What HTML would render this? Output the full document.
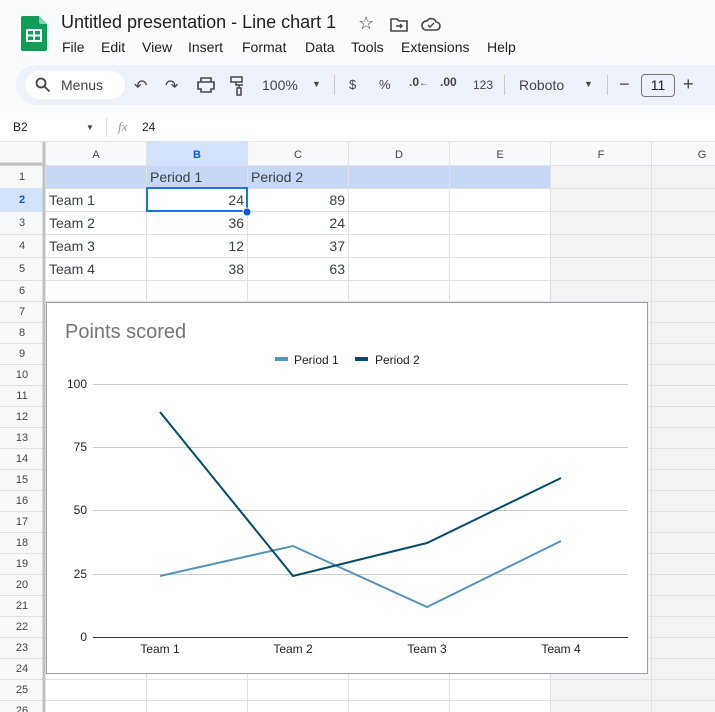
<!DOCTYPE html><html><head><style>
*{margin:0;padding:0;box-sizing:border-box}
body{width:715px;height:712px;overflow:hidden;background:#f9fbfd;font-family:"Liberation Sans",Arial,sans-serif;position:relative;color:#1f1f1f}
.a{position:absolute;white-space:nowrap}
</style></head><body>
<svg class="a" style="left:21px;top:16px" width="26" height="35" viewBox="0 0 26 35"><path d="M2 0h16l8 8v25a2 2 0 0 1-2 2H2a2 2 0 0 1-2-2V2a2 2 0 0 1 2-2z" fill="#0f9d58"/><path d="M18 0l8 8h-6a2 2 0 0 1-2-2z" fill="#87ceac"/><rect x="6" y="14" width="14" height="11" fill="none" stroke="#fff" stroke-width="2"/><path d="M6 19.5h14M13 14v11" stroke="#fff" stroke-width="2"/></svg>
<div class="a" style="left:61px;top:12px;font-size:18px">Untitled presentation - Line chart 1</div>
<div class="a" style="left:358px;top:13px;font-size:18px;color:#444">☆</div>
<svg class="a" style="left:390px;top:17px" width="18" height="15"><path d="M1 2h6l2 2h8v10H1z" fill="none" stroke="#444" stroke-width="1.6"/><path d="M6 9h6M10 7l2 2-2 2" stroke="#444" stroke-width="1.4" fill="none"/></svg>
<svg class="a" style="left:421px;top:17px" width="20" height="14"><path d="M5 13h10a4 4 0 0 0 0-8 5 5 0 0 0-9-1 4.5 4.5 0 0 0-1 9z" fill="none" stroke="#444" stroke-width="1.6"/><path d="M7 8l2 2 4-4" stroke="#444" stroke-width="1.4" fill="none"/></svg>
<div class="a" style="left:62px;top:39px;font-size:14px">File</div>
<div class="a" style="left:101px;top:39px;font-size:14px">Edit</div>
<div class="a" style="left:142px;top:39px;font-size:14px">View</div>
<div class="a" style="left:188px;top:39px;font-size:14px">Insert</div>
<div class="a" style="left:242px;top:39px;font-size:14px">Format</div>
<div class="a" style="left:305px;top:39px;font-size:14px">Data</div>
<div class="a" style="left:351px;top:39px;font-size:14px">Tools</div>
<div class="a" style="left:401px;top:39px;font-size:14px">Extensions</div>
<div class="a" style="left:487px;top:39px;font-size:14px">Help</div>
<div class="a" style="left:16px;top:65px;width:720px;height:40px;background:#edf2fa;border-radius:20px"></div>
<div class="a" style="left:25px;top:71px;width:100px;height:28px;background:#fff;border-radius:14px"></div>
<svg class="a" style="left:35px;top:77px" width="16" height="16"><circle cx="6" cy="6" r="4.5" fill="none" stroke="#444" stroke-width="1.8"/><path d="M9.5 9.5l5 5" stroke="#444" stroke-width="1.8"/></svg>
<div class="a" style="left:61px;top:77px;font-size:14px;color:#444">Menus</div>
<div class="a" style="left:134px;top:76px;font-size:16px;color:#444">↶</div>
<div class="a" style="left:165px;top:76px;font-size:16px;color:#444">↷</div>
<svg class="a" style="left:197px;top:77px" width="18" height="16"><path d="M4 1h10v4H4zM1 5h16v7h-3v3H4v-3H1z" fill="none" stroke="#444" stroke-width="1.6"/></svg>
<svg class="a" style="left:229px;top:76px" width="16" height="20"><path d="M2 1h11v5H2zM7 6v3h7M10 9v3M8 12h4v7H8z" fill="none" stroke="#444" stroke-width="1.5"/></svg>
<div class="a" style="left:262px;top:77px;font-size:14px;color:#444">100%</div>
<div class="a" style="left:312px;top:79px;font-size:9px;color:#444">▼</div>
<div class="a" style="left:334px;top:75px;width:1px;height:20px;background:#c7c7c7"></div>
<div class="a" style="left:349px;top:77px;font-size:13px;color:#444">$</div>
<div class="a" style="left:379px;top:77px;font-size:13px;color:#444">%</div>
<div class="a" style="left:409px;top:75px;font-size:12px;color:#444;font-weight:bold">.0<span style="font-size:10px">←</span></div>
<div class="a" style="left:440px;top:75px;font-size:12px;color:#444;font-weight:bold">.00</div>
<div class="a" style="left:473px;top:78px;font-size:12px;color:#444">123</div>
<div class="a" style="left:504px;top:75px;width:1px;height:20px;background:#c7c7c7"></div>
<div class="a" style="left:519px;top:77px;font-size:14px;color:#444">Roboto</div>
<div class="a" style="left:584px;top:79px;font-size:9px;color:#444">▼</div>
<div class="a" style="left:607px;top:75px;width:1px;height:20px;background:#c7c7c7"></div>
<div class="a" style="left:619px;top:74px;font-size:18px;color:#444">−</div>
<div class="a" style="left:641px;top:74px;width:34px;height:23px;border:1px solid #747775;border-radius:4px;font-size:14px;text-align:center;line-height:21px">11</div>
<div class="a" style="left:683px;top:74px;font-size:18px;color:#444">+</div>
<div class="a" style="left:0;top:113px;width:715px;height:29px;background:#fff;border-bottom:1px solid #e1e1e1"></div>
<div class="a" style="left:13px;top:120px;font-size:12px">B2</div>
<div class="a" style="left:86px;top:123px;font-size:8px;color:#444">▼</div>
<div class="a" style="left:106px;top:118px;width:1px;height:19px;background:#ddd"></div>
<div class="a" style="left:118px;top:119px;font-size:13px;color:#999;font-style:italic;font-family:'Liberation Serif',serif">fx</div>
<div class="a" style="left:142px;top:120px;font-size:12px">24</div>
<svg class="a" style="left:0;top:142px" width="715" height="570" font-family="Liberation Sans, Arial, sans-serif">
<rect x="0" y="0" width="715" height="570" fill="#fff"/>
<rect x="551" y="23" width="164" height="547" fill="#f3f3f3"/>
<rect x="0" y="0" width="715" height="23" fill="#f8f9fa"/>
<rect x="0" y="0" width="45" height="570" fill="#f8f9fa"/>
<rect x="147" y="0" width="100" height="23" fill="#d3e3fd"/>
<rect x="0" y="46" width="45" height="23" fill="#d3e3fd"/>
<rect x="46" y="23" width="504" height="23" fill="#c6d8f6"/>
<g stroke="#e1e1e1" stroke-width="1">
<path d="M0 23.5H715M0 46.5H715M0 69.5H715M0 92.5H715M0 115.5H715M0 138.5H715M0 159.5H715M0 180.5H715M0 201.5H715M0 222.5H715M0 243.5H715M0 264.5H715M0 285.5H715M0 306.5H715M0 327.5H715M0 348.5H715M0 369.5H715M0 390.5H715M0 411.5H715M0 432.5H715M0 453.5H715M0 474.5H715M0 495.5H715M0 516.5H715M0 537.5H715M0 558.5H715"/>
<path d="M146.5 0V570M247.5 0V570M348.5 0V570M449.5 0V570M550.5 0V570M651.5 0V570"/>
</g>
<rect x="0" y="0" width="45" height="23" fill="#f8f9fa"/>
<path d="M44 0V570M0 22H45" stroke="#c0c0c0" stroke-width="3"/>
<g font-size="11" fill="#444" text-anchor="middle">
<text x="96" y="16">A</text><text x="197" y="16" font-weight="bold" fill="#0b57d0">B</text><text x="298" y="16">C</text><text x="399" y="16">D</text><text x="500" y="16">E</text><text x="601" y="16">F</text><text x="702" y="16">G</text>
<text x="22" y="38">1</text><text x="22" y="61" font-weight="bold" fill="#0b57d0">2</text><text x="22" y="84">3</text><text x="22" y="107">4</text><text x="22" y="130">5</text>
<text x="22" y="152">6</text><text x="22" y="173">7</text><text x="22" y="194">8</text><text x="22" y="215">9</text><text x="22" y="236">10</text><text x="22" y="257">11</text><text x="22" y="278">12</text><text x="22" y="299">13</text><text x="22" y="320">14</text><text x="22" y="341">15</text><text x="22" y="362">16</text><text x="22" y="383">17</text><text x="22" y="404">18</text><text x="22" y="425">19</text><text x="22" y="446">20</text><text x="22" y="467">21</text><text x="22" y="488">22</text><text x="22" y="509">23</text><text x="22" y="530">24</text><text x="22" y="551">25</text><text x="22" y="572">26</text>
</g>
<g font-size="14" fill="#3c4043">
<text x="150" y="40">Period 1</text><text x="251" y="40">Period 2</text>
<text x="49" y="63">Team 1</text><text x="49" y="86">Team 2</text><text x="49" y="109">Team 3</text><text x="49" y="132">Team 4</text>
</g>
<g font-size="14" fill="#3c4043" text-anchor="end">
<text x="244" y="63">24</text><text x="244" y="86">36</text><text x="244" y="109">12</text><text x="244" y="132">38</text>
<text x="345" y="63">89</text><text x="345" y="86">24</text><text x="345" y="109">37</text><text x="345" y="132">63</text>
</g>
<rect x="147" y="46" width="100" height="23" fill="none" stroke="#1a73e8" stroke-width="2"/>
<circle cx="247" cy="70" r="4" fill="#0b57d0" stroke="#fff" stroke-width="1"/>
</svg>
<svg class="a" style="left:46px;top:302px" width="603" height="373" font-family="Liberation Sans, Arial, sans-serif">
<rect x="0.5" y="0.5" width="601" height="371" fill="#fff" stroke="#9aa0a6"/>
<text x="19" y="36" font-size="20" fill="#757575">Points scored</text>
<rect x="229" y="55" width="13" height="4" fill="#5b93b5"/><text x="248" y="62" font-size="12" fill="#222">Period 1</text>
<rect x="309" y="55" width="13" height="4" fill="#0b4a66"/><text x="329" y="62" font-size="12" fill="#222">Period 2</text>
<g stroke="#ccc"><path d="M47 82.5H582M47 145.5H582M47 208.5H582M47 272.5H582"/></g>
<path d="M47 335.5H582" stroke="#333"/>
<g font-size="12" fill="#222" text-anchor="end"><text x="41" y="86">100</text><text x="41" y="149">75</text><text x="41" y="212">50</text><text x="41" y="276">25</text><text x="41" y="339">0</text></g>
<g font-size="12" fill="#222" text-anchor="middle"><text x="114" y="351">Team 1</text><text x="247" y="351">Team 2</text><text x="381" y="351">Team 3</text><text x="515" y="351">Team 4</text></g>
<polyline points="114,274 247,244 381,305 515,239" fill="none" stroke="#5b93b5" stroke-width="2"/>
<polyline points="114,110 247,274 381,241 515,176" fill="none" stroke="#0b4a66" stroke-width="2"/>
</svg>
</body></html>
